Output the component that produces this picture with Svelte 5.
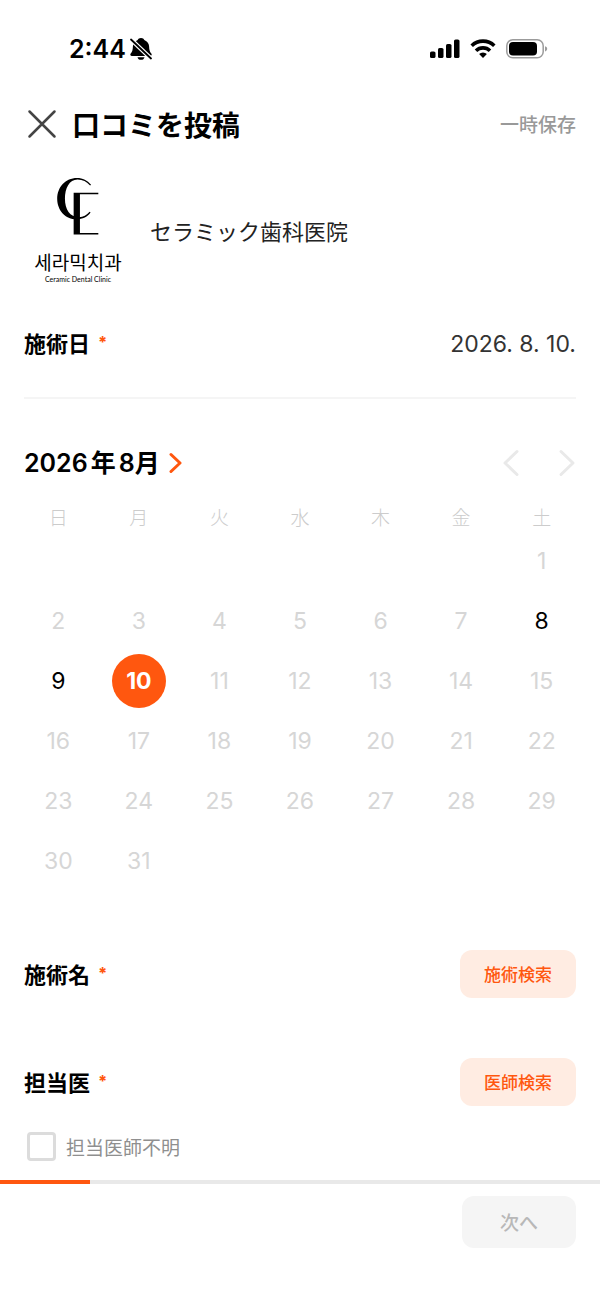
<script lang="ts">
  const weekdays = ['日', '月', '火', '水', '木', '金', '土'];
  const firstWeekday = 6;
  const daysInMonth = 31;
  const available = [8, 9, 10];

  let selected = $state(10);
  let unknownDoctor = $state(false);
  let progress = $state(15);

  const weeks: (number | null)[][] = [];
  for (let start = 1 - firstWeekday; start <= daysInMonth; start += 7) {
    weeks.push(
      weekdays.map((_, i) => {
        const day = start + i;
        return day >= 1 && day <= daysInMonth ? day : null;
      })
    );
  }
</script>

<div class="page">
  <div class="status-bar">
    <div class="status-time">
      <span>2:44</span>
      <svg width="22" height="24" viewBox="0 0 22 24" aria-hidden="true">
        <path d="M11 1C9.300 1 8.100 1.900 7.700 3.100 4.500 4.300 3 6.800 2.900 9.500c-.1 3.600-.7 5.200-2.200 7-.8 1-.3 2.500 1 2.500h18.600c1.300 0 1.800-1.500 1-2.500-1.500-1.800-2.100-3.400-2.200-7-.1-2.700-1.600-5.200-4.800-6.400C13.900 1.900 12.700 1 11 1z" />
        <path d="M7.500 20.200h7c-.3 1.600-1.600 2.600-3.500 2.600s-3.200-1-3.500-2.600z" />
        <path d="M0 1.500L22 22.500" stroke="#fff" stroke-width="4.200" />
        <path d="M1 2.500L21 21.500" stroke="#000" stroke-width="1.800" stroke-linecap="round" />
      </svg>
    </div>
    <div class="status-icons">
      <svg width="30" height="20" viewBox="0 0 30 20" aria-hidden="true">
        <rect x="0" y="12.500" width="5.500" height="6.500" rx="1.600" />
        <rect x="8" y="9" width="5.500" height="10" rx="1.600" />
        <rect x="16" y="5" width="5.500" height="14" rx="1.600" />
        <rect x="24" y="0.500" width="5.500" height="18.500" rx="1.600" />
      </svg>
      <svg width="26" height="20" viewBox="0 0 26 20" aria-hidden="true">
        <g fill="none" stroke="#000" stroke-width="3.600">
          <path d="M1.700 6.700a16.200 16.200 0 0 1 22.600 0" />
          <path d="M6 11.700a10 10 0 0 1 14 0" />
        </g>
        <path d="M13 19l-3.900-4a5.600 5.600 0 0 1 7.800 0z" />
      </svg>
      <svg width="42" height="20" viewBox="0 0 42 20" aria-hidden="true">
        <rect x="0.800" y="0.800" width="36.400" height="18" rx="6" fill="none" stroke="#9b9b9b" stroke-width="1.500" />
        <rect x="3" y="3" width="28" height="13.600" rx="4" />
        <path d="M39 7.200c1.600.5 2.200 1.400 2.200 2.600s-.6 2.100-2.200 2.600z" fill="#9b9b9b" />
      </svg>
    </div>
  </div>

  <header class="title-bar">
    <button class="icon-button" aria-label="閉じる">
      <svg width="36" height="36" viewBox="0 0 36 36" fill="none" stroke="#444" stroke-width="2.500" stroke-linecap="round">
        <path d="M5.500 5.500l25 25M30.500 5.500l-25 25" />
      </svg>
    </button>
    <h1>口コミを投稿</h1>
    <button class="save">一時保存</button>
  </header>

  <main>
    <section class="clinic">
      <div class="logo">
        <svg width="46" height="62" viewBox="0 0 46 62" aria-hidden="true">
          <path d="M36.500 9C32.500 4.400 28 2 22 2 10 2 1.500 11.500 1.500 23.500S10 44.800 21.500 44.800c6.500 0 11.500-2.800 14.500-7l-1-.8c-3 3.700-6.700 5.500-10.700 5.500C14.500 42.500 9.500 34.500 9.500 23.500S14 3.500 22.500 3.500c5.500 0 9.500 2.200 13 6.400z" />
          <path d="M18.500 17.300H44v1.600H25v40h19v1.600H18.500z" />
        </svg>
        <span class="logo-name" lang="ko">세라믹치과</span>
        <span class="logo-sub">Ceramic Dental Clinic</span>
      </div>
      <p>セラミック歯科医院</p>
    </section>

    <section class="row date-row">
      <h2>施術日 <span class="required">*</span></h2>
      <span class="date">2026. 8. 10.</span>
    </section>

    <section class="calendar">
      <div class="month-bar">
        <button class="month">
          <span>2026<span class="kanji">年</span>8月</span>
          <svg width="14" height="22" viewBox="0 0 14 22" fill="none" stroke="#ff570f" stroke-width="3" stroke-linecap="round" stroke-linejoin="round">
            <path d="M2 2.500l9 8.500-9 8.500" />
          </svg>
        </button>
        <div class="month-nav">
          <button class="icon-button" aria-label="前の月" disabled>
            <svg width="18" height="28" viewBox="0 0 18 28" fill="none" stroke="#e9e9e9" stroke-width="3" stroke-linecap="round" stroke-linejoin="round">
              <path d="M15 2.500L3 14l12 11.500" />
            </svg>
          </button>
          <button class="icon-button" aria-label="次の月" disabled>
            <svg width="18" height="28" viewBox="0 0 18 28" fill="none" stroke="#e9e9e9" stroke-width="3" stroke-linecap="round" stroke-linejoin="round">
              <path d="M3 2.500L15 14 3 25.500" />
            </svg>
          </button>
        </div>
      </div>

      <table>
        <thead>
          <tr>
            {#each weekdays as weekday}
              <th scope="col">{weekday}</th>
            {/each}
          </tr>
        </thead>
        <tbody>
          {#each weeks as week}
            <tr>
              {#each week as day}
                <td>
                  {#if day}
                    <button
                      class="day"
                      class:selected={day === selected}
                      disabled={!available.includes(day)}
                      onclick={() => (selected = day)}
                    >{day}</button>
                  {/if}
                </td>
              {/each}
            </tr>
          {/each}
        </tbody>
      </table>
    </section>

    <section class="row search-row">
      <h2>施術名 <span class="required">*</span></h2>
      <button class="search">施術検索</button>
    </section>

    <section class="row search-row">
      <h2>担当医 <span class="required">*</span></h2>
      <button class="search">医師検索</button>
    </section>

    <label class="unknown">
      <input type="checkbox" bind:checked={unknownDoctor} />
      <span>担当医師不明</span>
    </label>
  </main>

  <footer>
    <div class="progress">
      <div class="progress-value" style="width: {progress}%"></div>
    </div>
    <div class="actions">
      <button class="next" disabled>次へ</button>
    </div>
  </footer>
</div>

<style>
  :global(body) {
    background: #fff;
  }

  .page {
    display: flex;
    flex-direction: column;
    min-height: 100vh;
    color: #000;
    font-family: 'Noto Sans CJK JP', sans-serif;
  }

  button {
    padding: 0;
    border: none;
    background: none;
    color: inherit;
    font: inherit;
    cursor: pointer;
  }

  button:disabled {
    cursor: default;
  }

  svg {
    display: block;
  }

  h1,
  h2,
  p {
    margin: 0;
  }

  .status-time,
  .date,
  .month,
  .day {
    font-family: Inter, 'Noto Sans CJK JP', sans-serif;
  }

  .status-bar {
    display: flex;
    align-items: center;
    justify-content: space-between;
    height: 97px;
    padding: 0 52px 0 69px;
  }

  .status-time,
  .status-icons {
    display: flex;
    align-items: center;
  }

  .status-time {
    gap: 4px;
    font-size: 25px;
    font-weight: 600;
  }

  .status-icons {
    gap: 10px;
  }

  .title-bar {
    display: flex;
    align-items: center;
    height: 53px;
    padding: 0 24px;
  }

  .title-bar h1 {
    flex: 1;
    margin-left: 12px;
    font-size: 28px;
    font-weight: 700;
    line-height: 40px;
  }

  .save {
    color: #999;
    font-size: 19px;
    font-weight: 500;
    line-height: 28px;
  }

  main {
    padding: 0 24px;
  }

  .clinic {
    display: flex;
    align-items: center;
    gap: 18px;
    height: 160px;
  }

  .clinic p {
    color: #222;
    font-size: 22px;
    font-weight: 400;
    line-height: 32px;
  }

  .logo {
    display: flex;
    flex-direction: column;
    align-items: center;
    width: 108px;
    height: 108px;
  }

  .logo-name {
    margin-top: 14px;
    font-family: 'Noto Sans CJK KR', sans-serif;
    font-size: 19px;
    line-height: 24px;
    white-space: nowrap;
  }

  .logo-sub {
    font-family: Lato, sans-serif;
    font-size: 7px;
    line-height: 10px;
  }

  .row {
    display: flex;
    align-items: center;
    justify-content: space-between;
  }

  h2 {
    display: flex;
    gap: 8px;
    padding-bottom: 3px;
    font-size: 22px;
    font-weight: 700;
    line-height: 32px;
  }

  .required {
    color: #ff570f;
    font-family: Inter, sans-serif;
    font-size: 16px;
    font-weight: 800;
  }

  .date-row {
    height: 67px;
    padding-bottom: 20px;
    border-bottom: 2px solid #f5f5f5;
  }

  .date {
    color: #333;
    font-size: 23px;
    font-weight: 400;
  }

  .calendar {
    padding: 32px 0 59px;
  }

  .month-bar {
    display: flex;
    align-items: center;
    justify-content: space-between;
    height: 64px;
  }

  .month {
    display: flex;
    align-items: center;
    gap: 9px;
    font-size: 25px;
    font-weight: 600;
    line-height: 32px;
  }

  .month .kanji {
    margin: 0 3px;
  }

  .month-nav {
    display: flex;
    gap: 38px;
  }

  table {
    width: calc(100% + 12px);
    margin: 8px -6px 0;
    border-collapse: collapse;
    table-layout: fixed;
  }

  th {
    height: 28px;
    padding: 0;
    color: #ccc;
    font-size: 19px;
    font-weight: 300;
    line-height: 28px;
  }

  td {
    height: 60px;
    padding: 0;
    text-align: center;
  }

  .day {
    width: 54px;
    height: 54px;
    border-radius: 50%;
    font-size: 23px;
    vertical-align: middle;
  }

  .day:disabled {
    color: #d6d6d6;
  }

  .day.selected {
    background: #ff570f;
    color: #fff;
    font-weight: 700;
  }

  .search-row + .search-row {
    margin-top: 60px;
  }

  .search {
    height: 48px;
    padding: 0 24px;
    border-radius: 12px;
    background: #ffece2;
    color: #ff570f;
    font-size: 17px;
    font-weight: 500;
    line-height: 24px;
  }

  .unknown {
    display: flex;
    align-items: center;
    gap: 10px;
    width: fit-content;
    margin: 26px 0 0 3px;
    color: #8f8f8f;
    font-size: 19px;
    line-height: 28px;
  }

  .unknown input {
    appearance: none;
    box-sizing: border-box;
    width: 29px;
    height: 29px;
    margin: 0;
    border: 3px solid #dcdcdc;
    border-radius: 4px;
  }

  .unknown input:checked {
    border-color: #ff570f;
    background: #ff570f;
  }

  footer {
    margin-top: auto;
  }

  .progress {
    height: 4px;
    background: #e9e9e9;
  }

  .progress-value {
    height: 100%;
    background: #ff570f;
  }

  .actions {
    display: flex;
    justify-content: flex-end;
    padding: 12px 24px 57px;
  }

  .next {
    height: 52px;
    padding: 0 38px;
    border-radius: 12px;
    background: #f5f5f5;
    color: #b8b8b8;
    font-size: 19px;
    font-weight: 500;
    line-height: 28px;
  }
</style>
